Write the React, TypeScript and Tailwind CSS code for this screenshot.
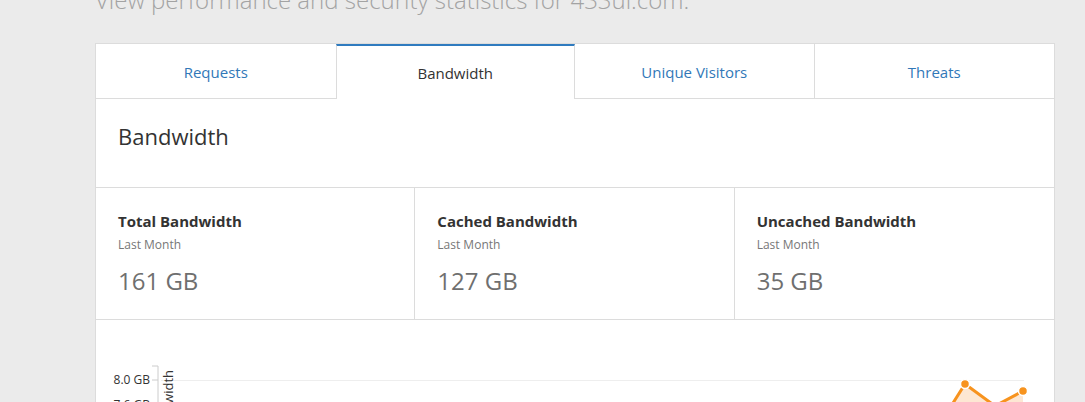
const tabs = ['Requests', 'Bandwidth', 'Unique Visitors', 'Threats']

const stats = [
  { label: 'Total Bandwidth', value: '161 GB' },
  { label: 'Cached Bandwidth', value: '127 GB' },
  { label: 'Uncached Bandwidth', value: '35 GB' },
]

function Chart() {
  return (
    <svg width="960" height="82" viewBox="95 320 960 82" className="block">
      <text x="149" y="384" textAnchor="end" fontSize="12" fill="#333" fontFamily="'Open Sans', sans-serif">8.0 GB</text>
      <text x="149" y="409" textAnchor="end" fontSize="12" fill="#333" fontFamily="'Open Sans', sans-serif">7.6 GB</text>
      <path d="M157 366 V402 M151 366 H157 M151 380 H157" stroke="#ccc" strokeWidth="1" fill="none" />
      <line x1="160" y1="380.5" x2="1023" y2="380.5" stroke="#eee" strokeWidth="1" />
      <text transform="translate(172 370) rotate(-90)" textAnchor="end" fontSize="13" fill="#333" fontFamily="'Open Sans', sans-serif">Bandwidth</text>
      <path d="M935 430 L964 384 L994 406 L1022 391 L1022 420 L935 420 Z" fill="#fde7d3" />
      <path d="M935 430 L964 384 L994 406 L1022 391" stroke="#f7931e" strokeWidth="3" fill="none" strokeLinejoin="round" />
      <circle cx="964" cy="384" r="4.5" fill="#f7931e" stroke="#fff" strokeWidth="1.5" />
      <circle cx="1022" cy="391" r="4.5" fill="#f7931e" stroke="#fff" strokeWidth="1.5" />
    </svg>
  )
}

export default function App() {
  return (
    <div className="h-[402px] w-[1085px] overflow-hidden bg-[#ebebeb] font-['Open_Sans',sans-serif]">
      <div className="pl-[95px] pr-[30px]">
        <h2 className="mt-[-16px] h-[59px] text-[24px] font-light leading-[32px] text-[#a3a3a3]">
          View performance and security statistics for 433ui.com.
        </h2>
        <div className="border border-[#dcdcdc] bg-white">
          <div className="grid grid-cols-4">
            {tabs.map((t, i) => (
              <div
                key={t}
                className={`flex h-[55px] items-center justify-center pt-[2px] text-[15px] ${
                  i === 1
                    ? 'border-x border-t-2 border-x-[#dcdcdc] border-t-[#2f7bbf] text-[#333]'
                    : 'border-b border-[#dcdcdc] text-[#3178b8]'
                } ${i === 2 ? 'border-r' : ''}`}
              >
                {t}
              </div>
            ))}
          </div>
          <div className="flex h-[89px] items-center border-b border-[#dcdcdc] px-[22px] pb-[14px] text-[22px] text-[#333]">
            Bandwidth
          </div>
          <div className="grid h-[132px] grid-cols-3 border-b border-[#dcdcdc]">
            {stats.map((s, i) => (
              <div key={s.label} className={`px-[22px] pt-[23px] ${i < 2 ? 'border-r border-[#dcdcdc]' : ''}`}>
                <div className="text-[15px] font-bold leading-[20px] text-[#333]">{s.label}</div>
                <div className="mt-[6px] text-[12px] leading-[16px] text-[#777]">Last Month</div>
                <div className="mt-[12px] text-[24px] leading-[32px] text-[#6f6f6f]">{s.value}</div>
              </div>
            ))}
          </div>
          <Chart />
        </div>
      </div>
    </div>
  )
}
